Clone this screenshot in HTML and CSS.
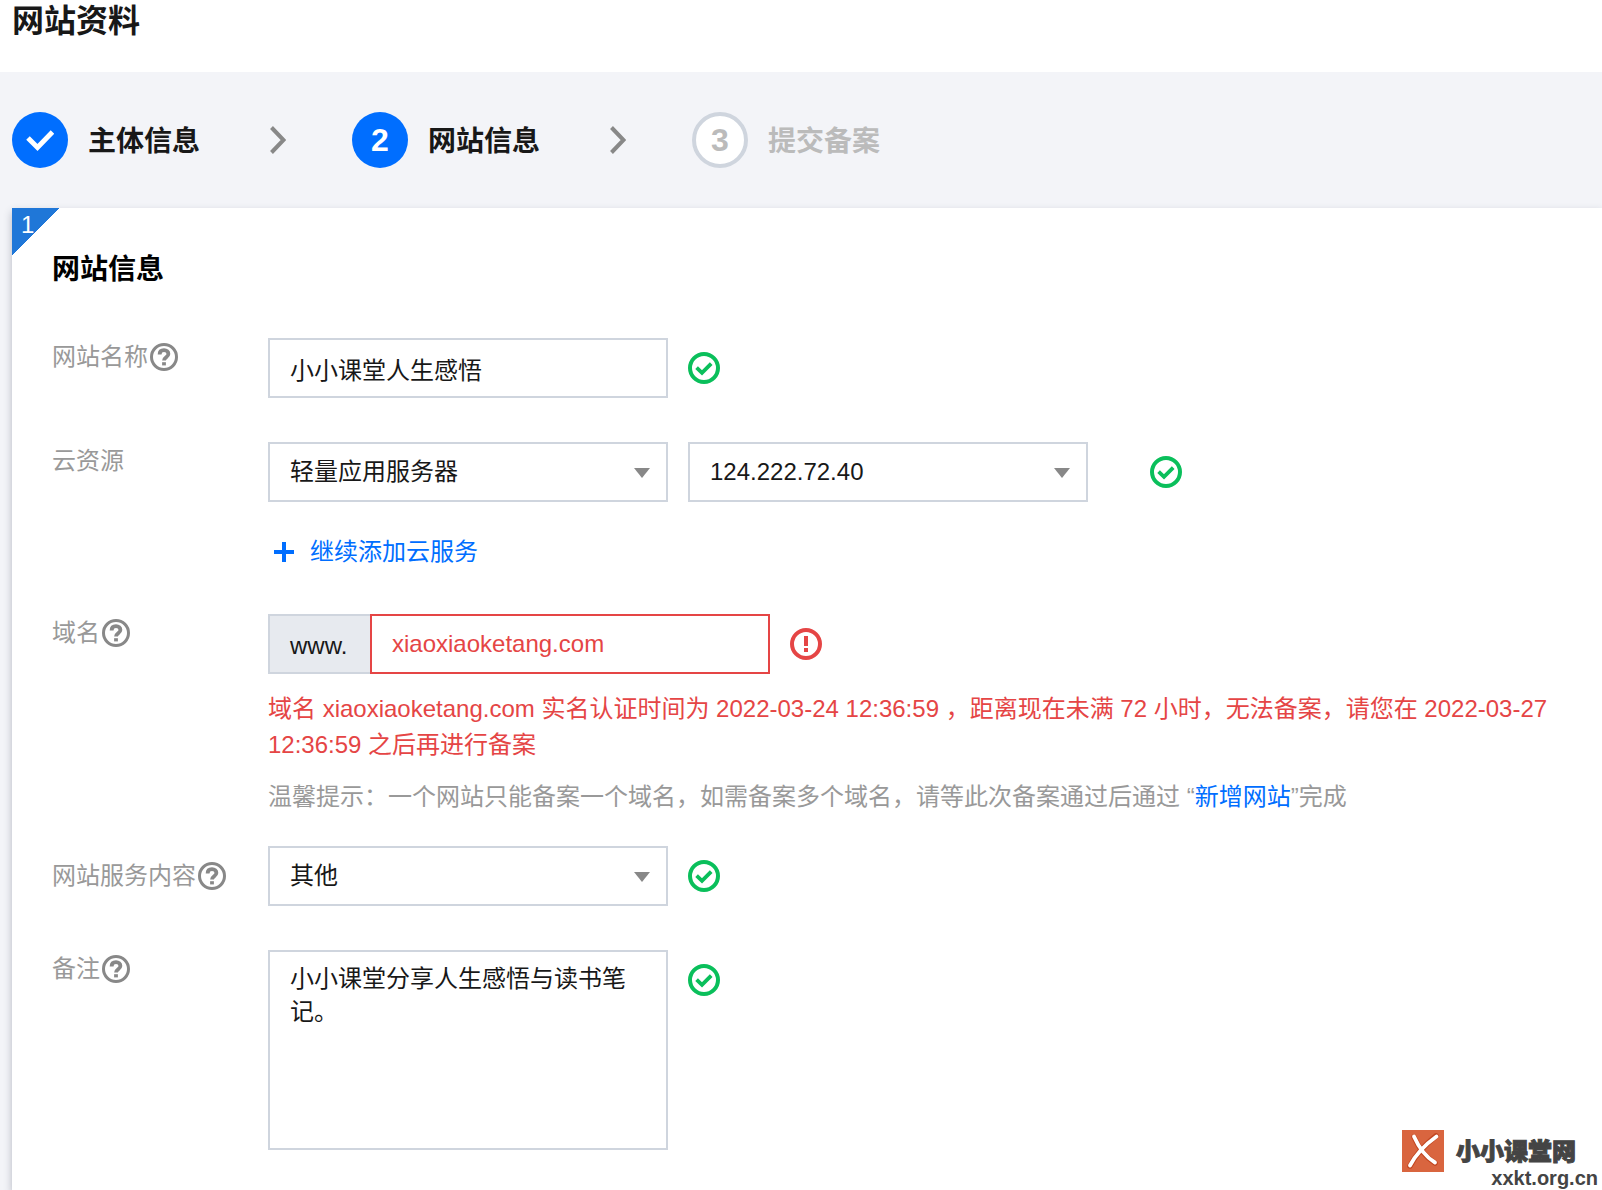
FILE: index.html
```html
<!DOCTYPE html>
<html lang="zh-CN">
<head>
<meta charset="utf-8">
<title>网站资料</title>
<meta name="viewport" content="width=device-width, initial-scale=1">
<link rel="stylesheet" href="styles.css">
</head>
<body>
<svg class="sprite" aria-hidden="true">
  <symbol id="icon-help" viewBox="0 0 28 28">
    <circle cx="14" cy="14" r="12.500" fill="none" stroke="currentColor" stroke-width="3"/>
    <path d="M9.600 11.400C9.600 8.600 11.400 7.200 14 7.200s4.400 1.600 4.400 3.800c0 3-4.400 3.400-4.400 6.400" fill="none" stroke="currentColor" stroke-width="3.800"/>
    <path d="M12.100 19.200h3.800v3.200h-3.800z" fill="currentColor"/>
  </symbol>
  <symbol id="icon-ok" viewBox="0 0 32 32">
    <circle cx="16" cy="16" r="14" fill="none" stroke="currentColor" stroke-width="4"/>
    <path d="M8.600 15.600l5.400 5.200 9.200-9.200" fill="none" stroke="currentColor" stroke-width="3.800"/>
  </symbol>
  <symbol id="icon-error" viewBox="0 0 32 32">
    <circle cx="16" cy="16" r="14" fill="none" stroke="currentColor" stroke-width="4"/>
    <path d="M14 8h4v10h-4zM14 20h4v4h-4z" fill="currentColor"/>
  </symbol>
  <symbol id="icon-chevron" viewBox="0 0 16 28">
    <path d="M1.500 1.500L13.500 14 1.500 26.500" fill="none" stroke="currentColor" stroke-width="4"/>
  </symbol>
</svg>

<header class="page-header">
  <h1 class="page-title">网站资料</h1>
</header>

<main class="page-body">
  <ol class="steps">
    <li class="step">
      <span class="step-mark"><svg class="step-tick" viewBox="0 0 28 24"><path d="M2 10l9.500 9.500L26.500 4" fill="none" stroke="currentColor" stroke-width="5"/></svg></span>
      <span class="step-name">主体信息</span>
      <svg class="step-arrow"><use href="#icon-chevron"/></svg>
    </li>
    <li class="step" aria-current="step">
      <span class="step-mark">2</span>
      <span class="step-name">网站信息</span>
      <svg class="step-arrow"><use href="#icon-chevron"/></svg>
    </li>
    <li class="step step-pending">
      <span class="step-mark">3</span>
      <span class="step-name">提交备案</span>
    </li>
  </ol>

  <section class="card">
    <span class="card-corner">1</span>
    <h2 class="card-title">网站信息</h2>
    <form class="form">
      <div class="row">
        <label class="label" for="site-name">网站名称<svg class="help"><use href="#icon-help"/></svg></label>
        <div class="line">
          <input class="control" id="site-name" type="text" value="小小课堂人生感悟">
          <svg class="status"><use href="#icon-ok"/></svg>
        </div>
      </div>

      <div class="row">
        <label class="label" for="cloud-type">云资源</label>
        <div class="field">
          <div class="line">
            <span class="select"><select class="control" id="cloud-type"><option>轻量应用服务器</option></select></span>
            <span class="select"><select class="control" aria-label="IP 地址"><option>124.222.72.40</option></select></span>
            <svg class="status status-far"><use href="#icon-ok"/></svg>
          </div>
          <button class="add" type="button">
            <svg class="add-icon" viewBox="0 0 20 20"><path d="M8 0h4v8h8v4h-8v8H8v-8H0V8h8z" fill="currentColor"/></svg>继续添加云服务
          </button>
        </div>
      </div>

      <div class="row row-domain">
        <label class="label" for="domain">域名<svg class="help"><use href="#icon-help"/></svg></label>
        <div class="field">
          <div class="line">
            <div class="domain">
              <span class="prefix">www.</span>
              <input class="control control-error" id="domain" type="text" value="xiaoxiaoketang.com">
            </div>
            <svg class="status status-error"><use href="#icon-error"/></svg>
          </div>
          <div class="notes">
            <p class="note note-error">域名 xiaoxiaoketang.com 实名认证时间为 2022-03-24 12:36:59 ，距离现在未满 72 小时，无法备案，请您在 2022-03-27 12:36:59 之后再进行备案</p>
            <p class="note">温馨提示：一个网站只能备案一个域名，如需备案多个域名，请等此次备案通过后通过 “<a class="link" href="#">新增网站</a>”完成</p>
          </div>
        </div>
      </div>

      <div class="row row-center">
        <label class="label" for="service">网站服务内容<svg class="help"><use href="#icon-help"/></svg></label>
        <div class="line">
          <span class="select"><select class="control" id="service"><option>其他</option></select></span>
          <svg class="status"><use href="#icon-ok"/></svg>
        </div>
      </div>

      <div class="row">
        <label class="label" for="remark">备注<svg class="help"><use href="#icon-help"/></svg></label>
        <div class="line line-top">
          <textarea class="control control-area" id="remark">小小课堂分享人生感悟与读书笔记。</textarea>
          <svg class="status"><use href="#icon-ok"/></svg>
        </div>
      </div>
    </form>
  </section>

  <aside class="watermark">
    <svg class="watermark-logo" viewBox="0 0 42 42">
      <path d="M0 0h42v42H0z" fill="#d9653f"/>
      <path d="M12 7c4 9 11 20 21 26M34 6C24 14 14 24 8 36" fill="none" stroke="#c2451f" stroke-width="5.500" stroke-linecap="round"/>
      <path d="M12 6.500c4 9 11 20 21 26M34.500 6.500C24 14 14 24 8 35.500" fill="none" stroke="#fff" stroke-width="3.800" stroke-linecap="round"/>
    </svg>
    <div class="watermark-text">
      <span class="watermark-name">小小课堂网</span>
      <span class="watermark-url">xxkt.org.cn</span>
    </div>
  </aside>
</main>
</body>
</html>
```
FILE: styles.css
```css
* {
  box-sizing: border-box;
}

body {
  display: flex;
  flex-direction: column;
  min-height: 100vh;
  margin: 0;
  background: #f3f4f8;
  color: #181818;
  font: 24px/36px "Liberation Sans", "Noto Sans CJK SC", sans-serif;
}

.sprite {
  position: absolute;
  width: 0;
  height: 0;
}

.page-header {
  height: 72px;
  padding-left: 12px;
  background: #fff;
}

.page-title {
  margin: 0;
  font-size: 32px;
  line-height: 42px;
}

.page-body {
  position: relative;
  display: flex;
  flex: 1;
  flex-direction: column;
  padding-left: 12px;
}

.steps {
  display: flex;
  margin: 0;
  padding: 40px 0;
  list-style: none;
}

.step {
  display: flex;
  align-items: center;
  width: 340px;
  font-size: 28px;
  font-weight: 700;
}

.step-mark {
  display: flex;
  align-items: center;
  justify-content: center;
  width: 56px;
  height: 56px;
  margin-right: 20px;
  border-radius: 50%;
  background: #006eff;
  color: #fff;
  font-size: 32px;
}

.step-name {
  padding-top: 4px;
}

.step-tick {
  width: 28px;
  height: 24px;
}

.step-arrow {
  width: 16px;
  height: 28px;
  margin-left: 70px;
  color: #888;
}

.step-pending {
  color: #bbb;
}

.step-pending .step-mark {
  border: 4px solid #cfd5de;
  background: #fff;
  color: #bbb;
}

.card {
  position: relative;
  flex: 1;
  padding: 42px 40px 40px;
  background: #fff;
  box-shadow: 0 4px 8px rgba(54, 58, 80, 0.32);
}

.card-corner {
  position: absolute;
  top: 0;
  left: 0;
  width: 48px;
  height: 48px;
  padding-left: 9px;
  background: linear-gradient(135deg, #1f77d8 50%, transparent 50%);
  color: #fff;
  line-height: 34px;
}

.card-title {
  margin: 0 0 48px;
  color: #000;
  font-size: 28px;
  line-height: 40px;
}

.form {
  display: flex;
  flex-direction: column;
  gap: 44px;
}

.row {
  display: grid;
  grid-template-columns: 216px 1fr;
  align-items: start;
}

.row-domain {
  margin-bottom: -12px;
}

.row-center {
  align-items: center;
}

.label {
  display: flex;
  align-items: center;
  gap: 2px;
  color: #999;
  line-height: 38px;
}

.help {
  width: 28px;
  height: 28px;
  color: #888;
}

.line {
  display: flex;
  align-items: center;
  gap: 20px;
}

.line-top {
  align-items: flex-start;
}

.line-top .status {
  margin-top: 14px;
}

.control {
  display: block;
  width: 400px;
  height: 60px;
  margin: 0;
  padding: 0 20px;
  border: 2px solid #cfd5de;
  border-radius: 0;
  outline: 0;
  background: #fff;
  color: inherit;
  font: inherit;
  appearance: none;
}

.control-area {
  height: 200px;
  padding: 10px 20px;
  line-height: 33px;
  resize: none;
}

.control-error {
  border-color: #e54545;
  color: #e54545;
}

.select {
  position: relative;
}

.select::after {
  position: absolute;
  top: 26px;
  right: 18px;
  border: 8px solid transparent;
  border-top: 10px solid #888;
  border-bottom: 0;
  content: "";
  pointer-events: none;
}

.status {
  flex: none;
  width: 32px;
  height: 32px;
  color: #0abf5b;
}

.status-far {
  margin-left: 42px;
}

.status-error {
  color: #e54545;
}

.add {
  display: flex;
  align-items: center;
  gap: 16px;
  margin: 32px 0 0;
  padding: 0 6px;
  border: 0;
  background: none;
  color: #006eff;
  font: inherit;
}

.add-icon {
  width: 20px;
  height: 20px;
}

.domain {
  display: flex;
}

.prefix {
  min-width: 102px;
  height: 60px;
  padding: 0 20px;
  border: 2px solid #cfd5de;
  border-right: 0;
  background: #e7eaef;
  line-height: 60px;
}

.notes {
  display: flex;
  flex-direction: column;
  gap: 16px;
  padding-top: 17px;
  margin-bottom: -1px;
}

.note {
  margin: 0;
  color: #999;
}

.note-error {
  color: #e54545;
}

.link {
  color: #006eff;
  text-decoration: none;
}

.watermark {
  position: absolute;
  right: 4px;
  bottom: 0;
  display: flex;
  gap: 12px;
  color: #444;
}

.watermark-logo {
  width: 42px;
  height: 42px;
}

.watermark-text {
  display: flex;
  flex-direction: column;
}

.watermark-name {
  padding: 8px 22px 0 0;
  font-size: 24px;
  font-weight: 900;
  line-height: 28px;
  -webkit-text-stroke: 1px #444;
}

.watermark-url {
  align-self: flex-end;
  font-size: 20px;
  font-weight: 700;
  line-height: 24px;
}
```
